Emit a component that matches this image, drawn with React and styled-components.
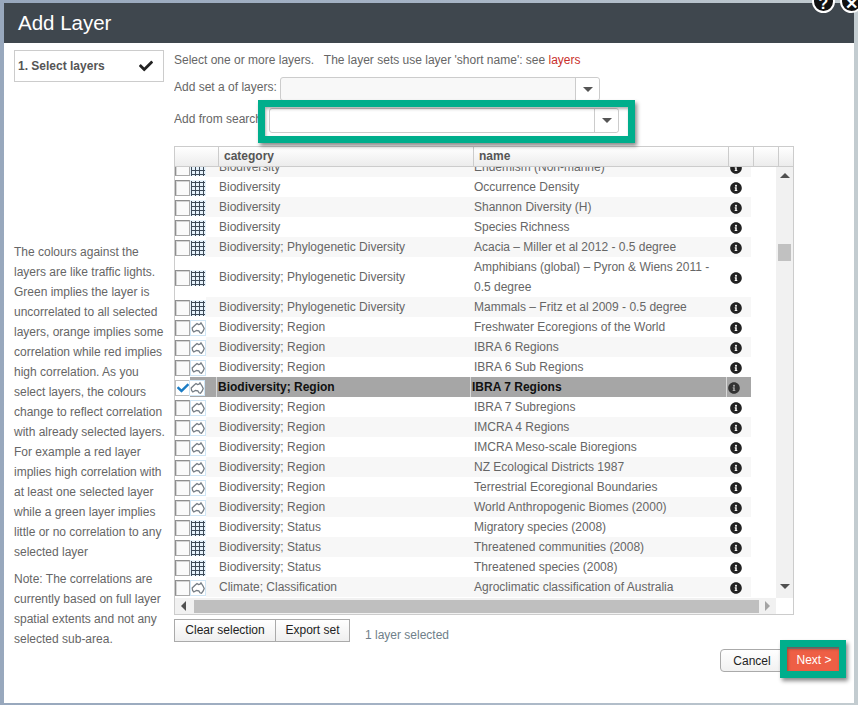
import React from "react";
import styled, { createGlobalStyle } from "styled-components";
import { FaCheck, FaInfoCircle } from "react-icons/fa";

const Global = createGlobalStyle`
  html, body { margin: 0; padding: 0; width: 858px; height: 705px; overflow: hidden; }
  body { font-family: "Liberation Sans", Arial, sans-serif; font-size: 12px; color: #666; }
`;

const Page = styled.div`
  position: relative;
  width: 858px;
  height: 705px;
  overflow: hidden;
  background: linear-gradient(to right, #98a8bd 0, #a5b3c5 50%, #c3ccd0 100%);
  padding: 3px 4px 2px 4px;
  box-sizing: border-box;
`;
const Modal = styled.div`
  width: 850px;
  height: 700px;
  background: #fff;
  display: flex;
  flex-direction: column;
`;
const Header = styled.header`
  height: 40px;
  flex: none;
  background: #3f474e;
  color: #fff;
  display: flex;
  align-items: center;
  padding-left: 14px;
  font-size: 20.5px;
  padding-bottom: 0;
  box-sizing: border-box;
`;
const RoundButton = styled.div`
  position: absolute;
  top: -10px;
  left: ${(p) => p.$left}px;
  width: 19px;
  height: 19px;
  border-radius: 50%;
  background: #111;
  border: 2px solid #fff;
  color: #fff;
  font-weight: bold;
  font-size: 16px;
  line-height: 24px;
  text-align: center;
`;
const Body = styled.div`
  flex: 1;
  display: flex;
  gap: 10px;
  padding: 7px 10px;
`;
const Side = styled.aside`
  width: 150px;
  flex: none;
  display: flex;
  flex-direction: column;
`;
const StepBox = styled.div`
  height: 32px;
  box-sizing: border-box;
  border: 1px solid #ccc;
  display: flex;
  align-items: center;
  justify-content: space-between;
  padding: 0 10px 1px 3px;
  font-weight: bold;
  color: #555;
  margin-bottom: 160px;
  svg { color: #222; }
`;
const HelpText = styled.p`
  margin: 0 -5px 7px 0;
  line-height: 20px;
  color: #666;
`;
const Main = styled.main`
  flex: 1;
  display: flex;
  flex-direction: column;
`;
const Intro = styled.div`
  height: 20px;
  line-height: 20px;
  color: #666;
  white-space: pre;
`;
const LayersLink = styled.span`
  color: #c9302c;
`;
const FormRow = styled.div`
  display: flex;
  align-items: center;
  margin-top: 7px;
`;
const Label = styled.label`
  width: ${(p) => p.$w}px;
  flex: none;
  white-space: nowrap;
  color: #666;
  padding-bottom: ${(p) => p.$pb}px;
  overflow: hidden;
`;
const Select = styled.div`
  width: ${(p) => p.$w}px;
  height: ${(p) => p.$h}px;
  box-sizing: border-box;
  border: 1px solid #ccc;
  border-radius: 3px;
  display: flex;
  background: ${(p) => p.$bg};
`;
const SelectInput = styled.div`
  flex: 1;
`;
const SelectButton = styled.div`
  width: 23px;
  background: #fff;
  border-left: 1px solid #ccc;
  border-radius: 0 3px 3px 0;
  display: flex;
  align-items: center;
  justify-content: center;
`;
const Caret = styled.span`
  width: 0;
  height: 0;
  border-left: 5px solid transparent;
  border-right: 5px solid transparent;
  border-top: 5px solid #555;
`;
const Table = styled.div`
  margin-top: 13px;
  width: 620px;
  height: 469px;
  box-sizing: border-box;
  border: 1px solid #ccc;
  display: flex;
  flex-direction: column;
`;
const HeadRow = styled.div`
  height: 20px;
  flex: none;
  box-sizing: border-box;
  display: grid;
  grid-template-columns: 43px 255px 255px 25px 25px 15px;
  background: linear-gradient(#fff, #ececec);
  border-bottom: 1px solid #ccc;
`;
const HeadCell = styled.div`
  font-weight: bold;
  color: #555;
  line-height: 19px;
  padding-left: 5px;
  border-left: ${(p) => (p.$first ? "none" : "1px solid #ccc")};
`;
const TableMiddle = styled.div`
  display: flex;
  height: 431px;
  flex: none;
`;
const Viewport = styled.div`
  width: 601px;
  flex: none;
  overflow: hidden;
`;
const RowList = styled.div`
  margin-top: -10px;
`;
const Row = styled.div`
  display: grid;
  grid-template-columns: 15px 16px 12px 255px 255px 23px;
  width: 576px;
  height: ${(p) => (p.$tall ? 40 : 20)}px;
  align-items: center;
`;
const SelectedRow = styled(Row)`
  grid-template-columns: 14px 16px 11px 254px 256px 25px;
  background: linear-gradient(to right, #fff 15px, #a6a6a6 15px);
  color: #111;
  font-weight: bold;
`;
const CheckBox = styled.span`
  width: 15px;
  height: 16px;
  margin-top: 2px;
  box-sizing: border-box;
  border: 1px solid #8e8e8e;
  border-right-color: #aaa;
  border-bottom-color: #aaa;
  box-shadow: inset 1px 1px 0 #d4d4d4;
  background: #fafafa;
`;
const CheckMark = styled.span`
  color: #1b7cc4;
  width: 15px;
  height: 16px;
  margin-top: 2px;
  box-sizing: border-box;
  border: 1px solid #bdbdbd;
  background: #fff;
  display: flex;
  align-items: center;
  justify-content: center;
`;
const TypeIcon = styled.svg`
  width: 16px;
  height: 16px;
  margin-top: 2px;
  display: block;
  background: ${(p) => (p.$boxed ? "#fff" : "transparent")};
`;
const Cell = styled.div`
  height: 100%;
  display: flex;
  align-items: center;
  padding-left: 1px;
  line-height: 20px;
  color: ${(p) => (p.$selected ? "#111" : "#666")};
  background: ${(p) => (p.$striped ? "#f7f7f7" : "transparent")};
  border-left: ${(p) => (p.$selected ? "1px solid #d8d8d8" : "none")};
  box-sizing: border-box;
`;
const Filler = styled.div`
  height: 100%;
  background: ${(p) => (p.$striped ? "#f7f7f7" : "transparent")};
`;
const InfoCell = styled(Cell)`
  padding-left: ${(p) => (p.$selected ? 1 : 2)}px;
  padding-top: 2px;
  svg { color: ${(p) => (p.$selected ? "#333" : "#222")}; }
`;
const VScroll = styled.div`
  width: 17px;
  flex: none;
  background: #f1f1f1;
  display: flex;
  flex-direction: column;
  align-items: center;
`;
const ArrowBox = styled.div`
  height: ${(p) => p.$h || 17}px;
  width: ${(p) => p.$w || 17}px;
  margin-bottom: ${(p) => p.$mb || 0}px;
  flex: none;
  display: flex;
  align-items: center;
  justify-content: center;
`;
const ArrowUp = styled.span`
  border-left: 5px solid transparent;
  border-right: 5px solid transparent;
  border-bottom: 5px solid #505050;
`;
const ArrowDown = styled.span`
  border-left: 5px solid transparent;
  border-right: 5px solid transparent;
  border-top: 5px solid #505050;
`;
const ArrowLeft = styled.span`
  border-top: 5px solid transparent;
  border-bottom: 5px solid transparent;
  border-right: 5px solid #505050;
`;
const ArrowRight = styled.span`
  border-top: 5px solid transparent;
  border-bottom: 5px solid transparent;
  border-left: 5px solid #a3a3a3;
`;
const VTrack = styled.div`
  flex: 1;
  align-self: stretch;
  padding: 60px 2px 0;
`;
const VThumb = styled.div`
  height: 17px;
  background: #c1c1c1;
`;
const HScrollRow = styled.div`
  display: flex;
  height: 16px;
`;
const HScroll = styled.div`
  width: 601px;
  flex: none;
  display: flex;
  align-items: center;
  background: #f1f1f1;
`;
const HThumb = styled.div`
  width: 565px;
  height: 13px;
  margin-left: 2px;
  background: #bfbfbf;
`;
const ActionRow = styled.div`
  display: flex;
  align-items: center;
  margin-top: 4px;
  height: 23px;
`;
const FlatButton = styled.button`
  height: 23px;
  width: ${(p) => p.$w}px;
  box-sizing: border-box;
  padding: 0 0 1px;
  font: 12px "Liberation Sans", Arial, sans-serif;
  color: #222;
  background: linear-gradient(#fff, #efefef);
  border: 1px solid #aaa;
  margin-left: ${(p) => (p.$joined ? "-1px" : "0")};
`;
const SelectedCount = styled.span`
  margin-left: 15px;
  padding-top: 8px;
  color: #6f7f8a;
`;
const Footer = styled.div`
  display: flex;
  justify-content: flex-end;
  align-items: flex-start;
  margin-top: 7px;
  padding-right: 5px;
`;
const CancelButton = styled.button`
  width: 70px;
  height: 23px;
  margin-right: -3px;
  box-sizing: border-box;
  padding: 0 6px 0 0;
  font: 12px "Liberation Sans", Arial, sans-serif;
  color: #222;
  background: linear-gradient(#fff, #f1f1f1);
  border: 1px solid #aaa;
  border-radius: 4px;
`;
const NextButton = styled.button`
  width: 52px;
  height: 24px;
  box-sizing: border-box;
  padding: 0 0 0 2px;
  font: 12px "Liberation Sans", Arial, sans-serif;
  color: #fff;
  background: #ee5f45;
  border: none;
  border-top: 2px solid #8f8581;
  position: relative;
  margin-top: -2px;
`;
const Highlight = styled.div`
  position: absolute;
  left: ${(p) => p.$x}px;
  top: ${(p) => p.$y}px;
  width: ${(p) => p.$w}px;
  height: ${(p) => p.$h}px;
  box-sizing: border-box;
  border: 7px solid #00ae8c;
  box-shadow: 2px 3px 4px rgba(0, 0, 0, 0.45), inset 1px 2px 3px rgba(0, 0, 0, 0.3);
`;

const rows = [
  ["g", "Biodiversity", "Endemism (Non-marine)"],
  ["g", "Biodiversity", "Occurrence Density"],
  ["g", "Biodiversity", "Shannon Diversity (H)"],
  ["g", "Biodiversity", "Species Richness"],
  ["g", "Biodiversity; Phylogenetic Diversity", "Acacia – Miller et al 2012 - 0.5 degree"],
  ["g", "Biodiversity; Phylogenetic Diversity", "Amphibians (global) – Pyron & Wiens 2011 - 0.5 degree", true],
  ["g", "Biodiversity; Phylogenetic Diversity", "Mammals – Fritz et al 2009 - 0.5 degree"],
  ["m", "Biodiversity; Region", "Freshwater Ecoregions of the World"],
  ["m", "Biodiversity; Region", "IBRA 6 Regions"],
  ["m", "Biodiversity; Region", "IBRA 6 Sub Regions"],
  ["m", "Biodiversity; Region", "IBRA 7 Regions"],
  ["m", "Biodiversity; Region", "IBRA 7 Subregions"],
  ["m", "Biodiversity; Region", "IMCRA 4 Regions"],
  ["m", "Biodiversity; Region", "IMCRA Meso-scale Bioregions"],
  ["m", "Biodiversity; Region", "NZ Ecological Districts 1987"],
  ["m", "Biodiversity; Region", "Terrestrial Ecoregional Boundaries"],
  ["m", "Biodiversity; Region", "World Anthropogenic Biomes (2000)"],
  ["g", "Biodiversity; Status", "Migratory species (2008)"],
  ["g", "Biodiversity; Status", "Threatened communities (2008)"],
  ["g", "Biodiversity; Status", "Threatened species (2008)"],
  ["m", "Climate; Classification", "Agroclimatic classification of Australia"],
];
const SELECTED = 10;

function GridIcon() {
  return (
    <TypeIcon viewBox="0 0 16 16">
      <rect x="0" y="0" width="16" height="16" fill="#e6f2fb" />
      <path d="M1 2.5H15M1 6.5H15M1 10.5H15M1 14.5H15M1.5 1V16M5.5 1V16M9.5 1V16M13.5 1V16" stroke="#3d4a58" strokeWidth="1" fill="none" />
    </TypeIcon>
  );
}
function MapIcon({ boxed }) {
  return (
    <TypeIcon viewBox="0 0 16 16" $boxed={boxed}>
      <rect x="0.5" y="0.5" width="15" height="15" fill="#fff" stroke="#cfe5f5" />
      <path d="M2.2 8 L5 5.2 L7 3.5 L8.5 4.6 L10 4.2 L11 2.8 L13 6 L14.2 8.5 L13.2 11 L11.5 13.2 L10 12.8 L8.8 10.8 L6.5 10.5 L3.8 12 L2.6 10.5 Z" stroke="#757d85" strokeWidth="1.3" fill="none" />
    </TypeIcon>
  );
}

export default function App() {
  return (
    <Page>
      <Global />
      <Modal>
        <Header>Add Layer</Header>
        <Body>
          <Side>
            <StepBox>
              1. Select layers
              <FaCheck size={14} />
            </StepBox>
            <HelpText>
              The colours against the layers are like traffic lights. Green implies the layer is uncorrelated to all
              selected layers, orange implies some correlation while red implies high correlation. As you select
              layers, the colours change to reflect correlation with already selected layers. For example a red layer
              implies high correlation with at least one selected layer while a green layer implies little or no
              correlation to any selected layer
            </HelpText>
            <HelpText>
              Note: The correlations are currently based on full layer spatial extents and not any selected sub-area.
            </HelpText>
          </Side>
          <Main>
            <Intro>
              Select one or more layers.   The layer sets use layer 'short name': see <LayersLink>layers</LayersLink>
            </Intro>
            <FormRow>
              <Label $w={106} $pb={5}>Add set a of layers:</Label>
              <Select $w={320} $h={24} $bg="#f8f8f8">
                <SelectInput />
                <SelectButton>
                  <Caret />
                </SelectButton>
              </Select>
            </FormRow>
            <FormRow>
              <Label $w={95} $pb={3}>Add from search:</Label>
              <Select $w={350} $h={25} $bg="#fff">
                <SelectInput />
                <SelectButton>
                  <Caret />
                </SelectButton>
              </Select>
            </FormRow>
            <Table>
              <HeadRow>
                <HeadCell $first />
                <HeadCell>category</HeadCell>
                <HeadCell>name</HeadCell>
                <HeadCell />
                <HeadCell />
                <HeadCell />
              </HeadRow>
              <TableMiddle>
                <Viewport>
                  <RowList>
                    {rows.map(([type, category, name, tall], i) => {
                      const striped = i % 2 === 0;
                      if (i === SELECTED) {
                        return (
                          <SelectedRow key={name}>
                            <CheckMark>
                              <FaCheck size={12} />
                            </CheckMark>
                            <MapIcon boxed />
                            <span />
                            <Cell $selected>{category}</Cell>
                            <Cell $selected>{name}</Cell>
                            <InfoCell $selected>
                              <FaInfoCircle size={12} />
                            </InfoCell>
                          </SelectedRow>
                        );
                      }
                      return (
                        <Row key={name} $tall={tall}>
                          <CheckBox />
                          {type === "g" ? <GridIcon /> : <MapIcon />}
                          <Filler $striped={striped} />
                          <Cell $striped={striped}>{category}</Cell>
                          <Cell $striped={striped}>{name}</Cell>
                          <InfoCell $striped={striped}>
                            <FaInfoCircle size={12} />
                          </InfoCell>
                        </Row>
                      );
                    })}
                  </RowList>
                </Viewport>
                <VScroll>
                  <ArrowBox>
                    <ArrowUp />
                  </ArrowBox>
                  <VTrack>
                    <VThumb />
                  </VTrack>
                  <ArrowBox $mb={3}>
                    <ArrowDown />
                  </ArrowBox>
                </VScroll>
              </TableMiddle>
              <HScrollRow>
                <HScroll>
                  <ArrowBox $w={17} $h={15}>
                    <ArrowLeft />
                  </ArrowBox>
                  <HThumb />
                  <ArrowBox $w={17} $h={15}>
                    <ArrowRight />
                  </ArrowBox>
                </HScroll>
              </HScrollRow>
            </Table>
            <ActionRow>
              <FlatButton $w={102}>Clear selection</FlatButton>
              <FlatButton $w={75} $joined>
                Export set
              </FlatButton>
              <SelectedCount>1 layer selected</SelectedCount>
            </ActionRow>
            <Footer>
              <CancelButton>Cancel</CancelButton>
              <NextButton>Next &gt;</NextButton>
            </Footer>
          </Main>
        </Body>
      </Modal>
      <RoundButton $left={812}>?</RoundButton>
      <RoundButton $left={840}>✕</RoundButton>
      <Highlight $x={258} $y={100} $w={377} $h={43} />
      <Highlight $x={780} $y={640} $w={66} $h={38} />
    </Page>
  );
}
